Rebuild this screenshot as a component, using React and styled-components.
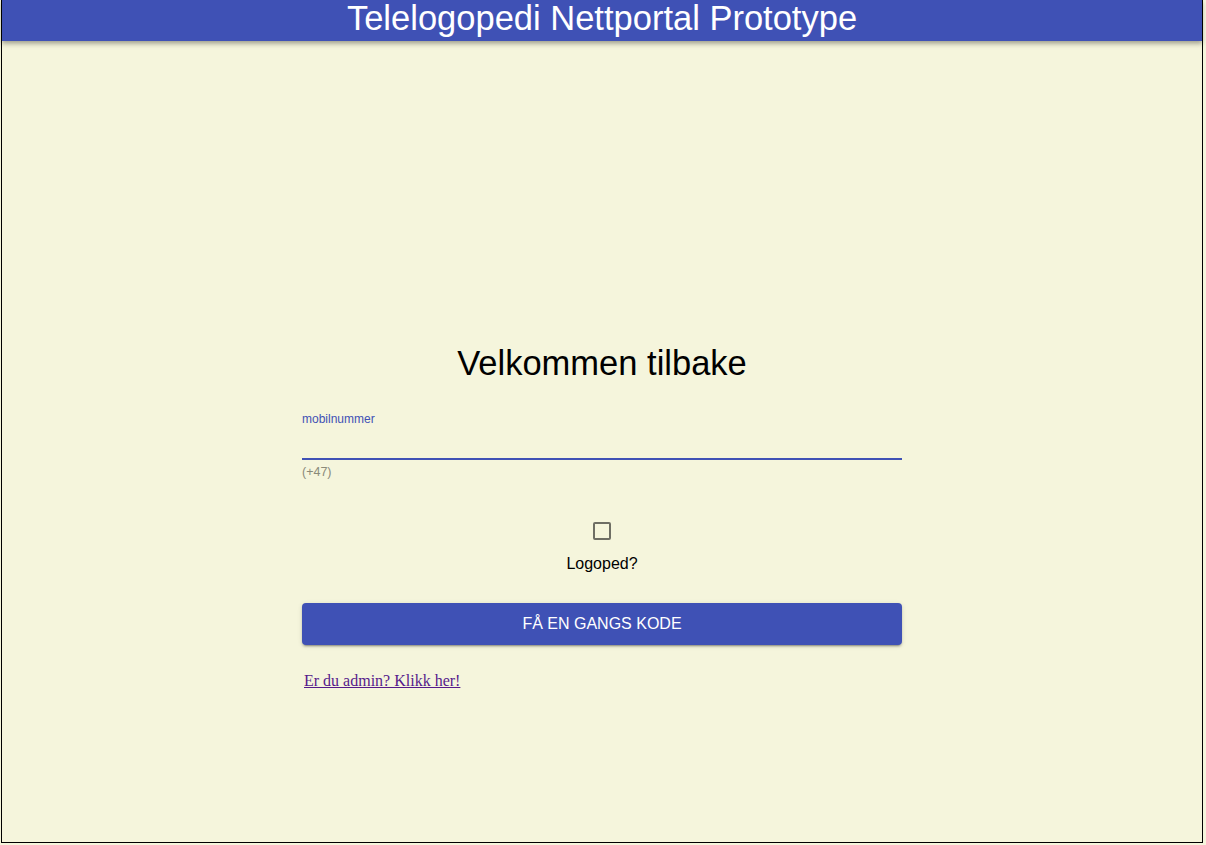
import React from 'react';
import styled, { createGlobalStyle } from 'styled-components';

const GlobalStyle = createGlobalStyle`
  html, body {
    margin: 0;
    padding: 0;
    background: #f5f5dc;
  }
  body {
    padding: 0 3px 2px 1px;
  }
`;

const Frame = styled.div`
  box-sizing: border-box;
  height: 843px;
  border: 1px solid #000;
  border-top: none;
  background: #f5f5dc;
  display: flex;
  flex-direction: column;
`;

const Header = styled.header`
  height: 41px;
  background: #3f51b5;
  color: #fff;
  display: flex;
  align-items: center;
  justify-content: center;
  box-shadow: 0 2px 4px rgba(0, 0, 0, 0.25), 0 4px 5px rgba(0, 0, 0, 0.12);
  font-family: 'Liberation Sans', Arial, sans-serif;
  font-size: 34.5px;
  line-height: 1;
  padding-bottom: 4px;
  box-sizing: border-box;
`;

const Main = styled.main`
  flex: 1;
  display: flex;
  justify-content: center;
  padding-top: 302px;
`;

const Form = styled.form`
  width: 600px;
  display: flex;
  flex-direction: column;
  font-family: 'Liberation Sans', Arial, sans-serif;
`;

const Title = styled.h1`
  margin: 0 0 29px;
  text-align: center;
  font-weight: 400;
  font-size: 34.5px;
  line-height: 40px;
  color: #000;
`;

const Field = styled.div`
  display: flex;
  flex-direction: column;
`;

const Label = styled.label`
  font-size: 12px;
  color: #3f51b5;
  line-height: 14px;
`;

const Input = styled.input`
  margin-top: 4px;
  height: 28px;
  border: none;
  border-bottom: 2px solid #3f51b5;
  background: transparent;
  outline: none;
  font-size: 16px;
  padding: 0;
`;

const Helper = styled.span`
  margin-top: 5px;
  font-size: 12.5px;
  line-height: 14px;
  color: #8a8a7a;
`;

const CheckRow = styled.div`
  margin-top: 43px;
  display: flex;
  flex-direction: column;
  align-items: center;
  gap: 15px;
`;

const Box = styled.span`
  width: 14px;
  height: 14px;
  border: 2px solid #6e6e64;
  border-radius: 2px;
`;

const CheckLabel = styled.span`
  font-size: 16px;
  line-height: 18px;
  color: #000;
`;

const Button = styled.button`
  margin-top: 30px;
  height: 42px;
  border: none;
  border-radius: 4px;
  background: #3f51b5;
  color: #fff;
  font-family: 'Liberation Sans', Arial, sans-serif;
  font-size: 16px;
  text-transform: uppercase;
  box-shadow: 0 3px 1px -2px rgba(0, 0, 0, 0.2), 0 2px 2px 0 rgba(0, 0, 0, 0.14),
    0 1px 5px 0 rgba(0, 0, 0, 0.12);
`;

const AdminLink = styled.a`
  margin: 27px 0 0 2px;
  align-self: flex-start;
  font-family: 'Liberation Serif', 'Times New Roman', serif;
  font-size: 16px;
  color: #551a8b;
  text-decoration: underline;
`;

const App = () => (
  <>
    <GlobalStyle />
    <Frame>
      <Header>Telelogopedi Nettportal Prototype</Header>
      <Main>
        <Form onSubmit={(e) => e.preventDefault()}>
          <Title>Velkommen tilbake</Title>
          <Field>
            <Label htmlFor="mobil">mobilnummer</Label>
            <Input id="mobil" type="tel" />
            <Helper>(+47)</Helper>
          </Field>
          <CheckRow>
            <Box />
            <CheckLabel>Logoped?</CheckLabel>
          </CheckRow>
          <Button type="submit">Få en gangs kode</Button>
          <AdminLink href="#admin">Er du admin? Klikk her!</AdminLink>
        </Form>
      </Main>
    </Frame>
  </>
);

export default App;
